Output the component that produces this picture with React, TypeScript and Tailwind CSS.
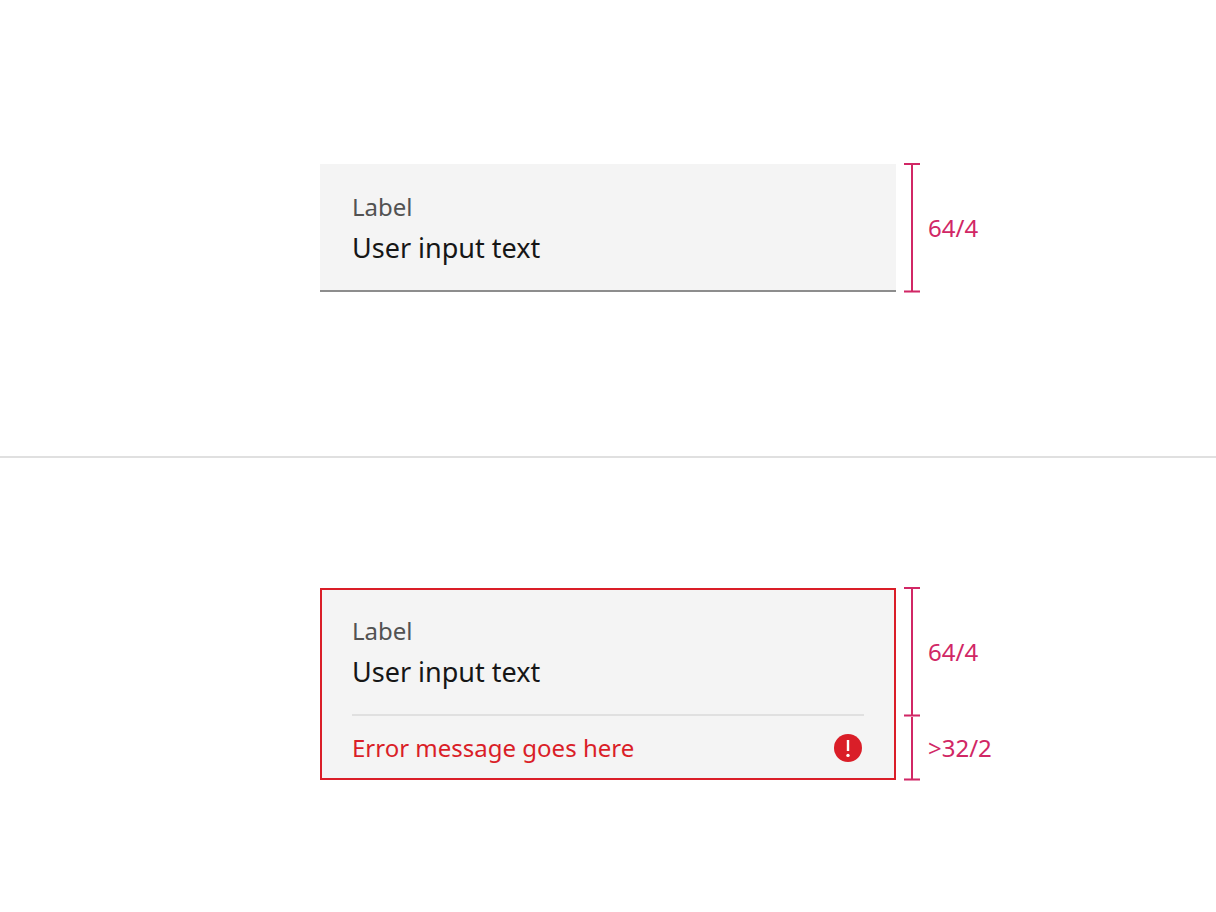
import { useId, useState } from "react";

type FieldProps = { error?: string };

function ErrorIcon() {
  return (
    <svg viewBox="0 0 28 28" className="h-7 w-7 shrink-0" role="img" aria-label="Error">
      <circle cx="14" cy="14" r="14" fill="#da1e28" />
      <rect x="12.8" y="6" width="2.4" height="11" fill="#fff" />
      <circle cx="14" cy="21.4" r="1.7" fill="#fff" />
    </svg>
  );
}

function FluidField({ error }: FieldProps) {
  const id = useId();
  const [value, setValue] = useState("User input text");

  return (
    <div
      className={
        error
          ? "border-2 border-[#da1e28] bg-[#f4f4f4] px-[30px] pt-[25px]"
          : "border-b-2 border-[#8d8d8d] bg-[#f4f4f4] px-8 pt-[27px]"
      }
    >
      <label htmlFor={id} className="block text-[24px] leading-8 text-[#525252]">
        {"Label"}
      </label>
      <input
        id={id}
        type="text"
        value={value}
        onChange={(event) => setValue(event.target.value)}
        aria-invalid={error ? true : undefined}
        aria-describedby={error ? `${id}-error` : undefined}
        className="mt-[5px] mb-[22px] block h-10 w-full bg-transparent text-[27px] leading-10 text-[#161616] outline-none"
      />
      {error && (
        <div className="flex h-16 items-center justify-between border-t-2 border-[#e0e0e0] pt-0.5 pr-0.5">
          <p id={`${id}-error`} className="text-[24px] leading-8 text-[#da1e28]">
            {error}
          </p>
          <ErrorIcon />
        </div>
      )}
    </div>
  );
}

function SoftCap() {
  return (
    <div className="flex h-[3px] w-4 justify-center border-y border-[#e78fb0] bg-[#d12765]">
      <div className="-mt-px h-0.5 w-0.5 bg-[#d12765]" />
    </div>
  );
}

function Stem({ label, className }: { label: string; className: string }) {
  return (
    <div className={`flex items-center ${className}`}>
      <div className="mx-[7px] h-full w-0.5 bg-[#d12765]" />
      <span className="ml-2 text-[24px] leading-8 text-[#d12765]">{label}</span>
    </div>
  );
}

export default function App() {
  return (
    <main className="min-h-screen bg-white font-['Noto_Sans',sans-serif]">
      <section className="grid grid-cols-[5fr_9fr_5fr] items-start border-b-2 border-[#e0e0e0] pt-[164px] pb-[163px]">
        <div className="col-start-2">
          <FluidField />
        </div>
        <div className="-mt-px ml-2">
          <div className="h-0.5 w-4 bg-[#d12765]" />
          <Stem label="64/4" className="h-[125px]" />
          <SoftCap />
        </div>
      </section>
      <section className="grid grid-cols-[5fr_9fr_5fr] items-start pt-[130px] pb-[130px]">
        <div className="col-start-2">
          <FluidField error="Error message goes here" />
        </div>
        <div className="-mt-px ml-2">
          <div className="h-0.5 w-4 bg-[#d12765]" />
          <Stem label="64/4" className="h-[125px]" />
          <SoftCap />
          <Stem label=">32/2" className="h-[61px]" />
          <SoftCap />
        </div>
      </section>
    </main>
  );
}
